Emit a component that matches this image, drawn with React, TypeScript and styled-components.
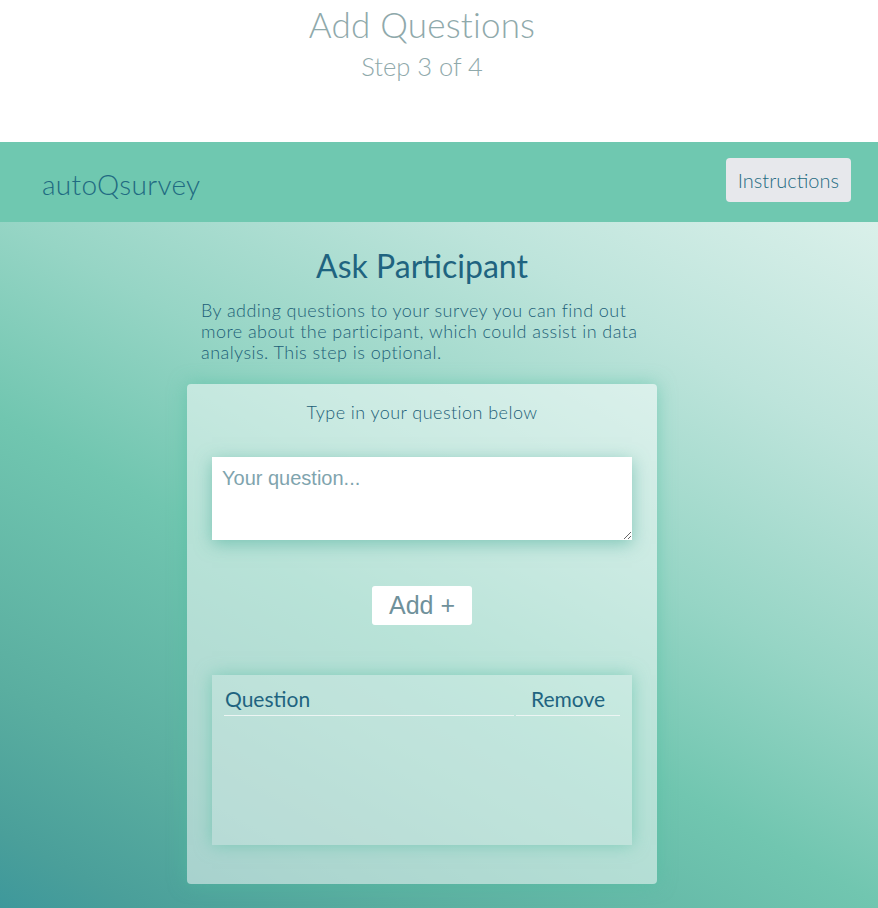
import React from 'react'
import styled, { createGlobalStyle } from 'styled-components'

const GlobalStyle = createGlobalStyle`
    html, body {
        margin: 0;
        padding: 0;
        background: #ffffff;
    }
    body {
        font-family: Lato, "Open Sans", sans-serif;
    }
`

export default function App() {
    return (
        <>
            <GlobalStyle />
            <Page>
                <StepHeader>
                    <StepTitle>Add Questions</StepTitle>
                    <StepCount>Step 3 of 4</StepCount>
                </StepHeader>
                <NavBar>
                    <Brand>autoQsurvey</Brand>
                    <NavButton>Instructions</NavButton>
                </NavBar>
                <Main>
                    <Column>
                        <SectionTitle>Ask Participant</SectionTitle>
                        <Intro>
                            By adding questions to your survey you can find out more about the participant, which could assist in data analysis. This step is optional.
                        </Intro>
                        <Panel>
                            <PanelLabel>Type in your question below</PanelLabel>
                            <QuestionInput placeholder='Your question...' />
                            <AddButton>Add +</AddButton>
                            <ListBox>
                                <QuestionTable>
                                    <thead>
                                        <tr>
                                            <HeadCell>Question</HeadCell>
                                            <HeadCell $narrow>Remove</HeadCell>
                                        </tr>
                                    </thead>
                                    <tbody />
                                </QuestionTable>
                            </ListBox>
                        </Panel>
                    </Column>
                </Main>
            </Page>
        </>
    )
}

const Page = styled.div`
    width: 878px;
    min-height: 908px;
    display: flex;
    flex-direction: column;
`
const StepHeader = styled.header`
    height: 142px;
    box-sizing: border-box;
    padding-right: 34px;
    text-align: center;
    color: #8fa9ab;
    font-weight: 300;
`
const StepTitle = styled.h1`
    margin: 0;
    padding-top: 4px;
    font-size: 35px;
    line-height: 40px;
    font-weight: 300;
    letter-spacing: 0.2px;
`
const StepCount = styled.div`
    margin-top: 8px;
    font-size: 25.5px;
    line-height: 28px;
    font-weight: 300;
`
const NavBar = styled.nav`
    height: 80px;
    background: #6fc8b0;
    display: flex;
    align-items: center;
    justify-content: space-between;
    padding: 0 27px 0 42px;
`
const Brand = styled.div`
    font-size: 28px;
    font-weight: 300;
    color: #1f6b82;
    margin-top: 4px;
    letter-spacing: 0.3px;
`
const NavButton = styled.button`
    height: 44px;
    padding: 0 12px;
    margin-top: -4px;
    border: none;
    border-radius: 4px;
    background: #e7e8ec;
    color: #1f6b82;
    font-family: Lato, sans-serif;
    font-size: 20px;
    font-weight: 300;
`
const Main = styled.main`
    flex: 1;
    background: linear-gradient(29deg, #3e989b 0%, #4a9f9a 6.5%, #5aaea0 19%, #71c6b0 42%, #96d5c5 59%, #bde4db 80%, #daf0ea 100%);
    padding-right: 34px;
    display: flex;
    justify-content: center;
`
const Column = styled.div`
    width: 470px;
    display: flex;
    flex-direction: column;
    align-items: center;
    padding-bottom: 23px;
`
const SectionTitle = styled.h2`
    margin: 25px 0 0;
    font-size: 32px;
    line-height: 38px;
    font-weight: 400;
    color: #1f6480;
`
const Intro = styled.p`
    width: 450px;
    margin: 15px 0 21px 14px;
    align-self: flex-start;
    font-size: 18px;
    line-height: 21px;
    font-weight: 300;
    letter-spacing: 0.45px;
    color: #1d5f78;
`
const Panel = styled.section`
    width: 470px;
    height: 500px;
    box-sizing: border-box;
    border-radius: 4px;
    background: rgba(255, 255, 255, 0.5);
    box-shadow: 0 0 18px rgba(80, 190, 160, 0.55);
    display: flex;
    flex-direction: column;
    align-items: center;
    padding-top: 18px;
`
const PanelLabel = styled.div`
    font-size: 18px;
    line-height: 20px;
    font-weight: 300;
    letter-spacing: 0.45px;
    color: #1d5f78;
`
const QuestionInput = styled.textarea`
    width: 420px;
    height: 83px;
    box-sizing: border-box;
    margin-top: 35px;
    border: none;
    padding: 10px 10px;
    font-family: "Liberation Sans", Arial, sans-serif;
    font-size: 20px;
    color: #345;
    background: #fff;
    box-shadow: 0 4px 16px rgba(70, 170, 150, 0.55);
    outline: none;
    &::placeholder {
        color: #7fa4ae;
    }
`
const AddButton = styled.button`
    margin-top: 46px;
    width: 100px;
    height: 39px;
    border: none;
    border-radius: 3px;
    background: #ffffff;
    color: #6f919b;
    font-family: "Liberation Sans", Arial, sans-serif;
    font-size: 25px;
`
const ListBox = styled.div`
    margin-top: 50px;
    width: 420px;
    height: 170px;
    box-sizing: border-box;
    padding: 8px 10px;
    background: rgba(255, 255, 255, 0.15);
    box-shadow: 0 0 16px rgba(90, 190, 165, 0.6);
`
const QuestionTable = styled.table`
    width: 100%;
    border-spacing: 2px;
`
const HeadCell = styled.th<{ $narrow?: boolean }>`
    width: ${(p) => (p.$narrow ? '102px' : 'auto')};
    text-align: ${(p) => (p.$narrow ? 'center' : 'left')};
    padding: 2px 1px 4px;
    font-size: 21px;
    line-height: 24px;
    font-weight: 400;
    color: #1f6480;
    border-bottom: 1px solid #edf5f3;
`
